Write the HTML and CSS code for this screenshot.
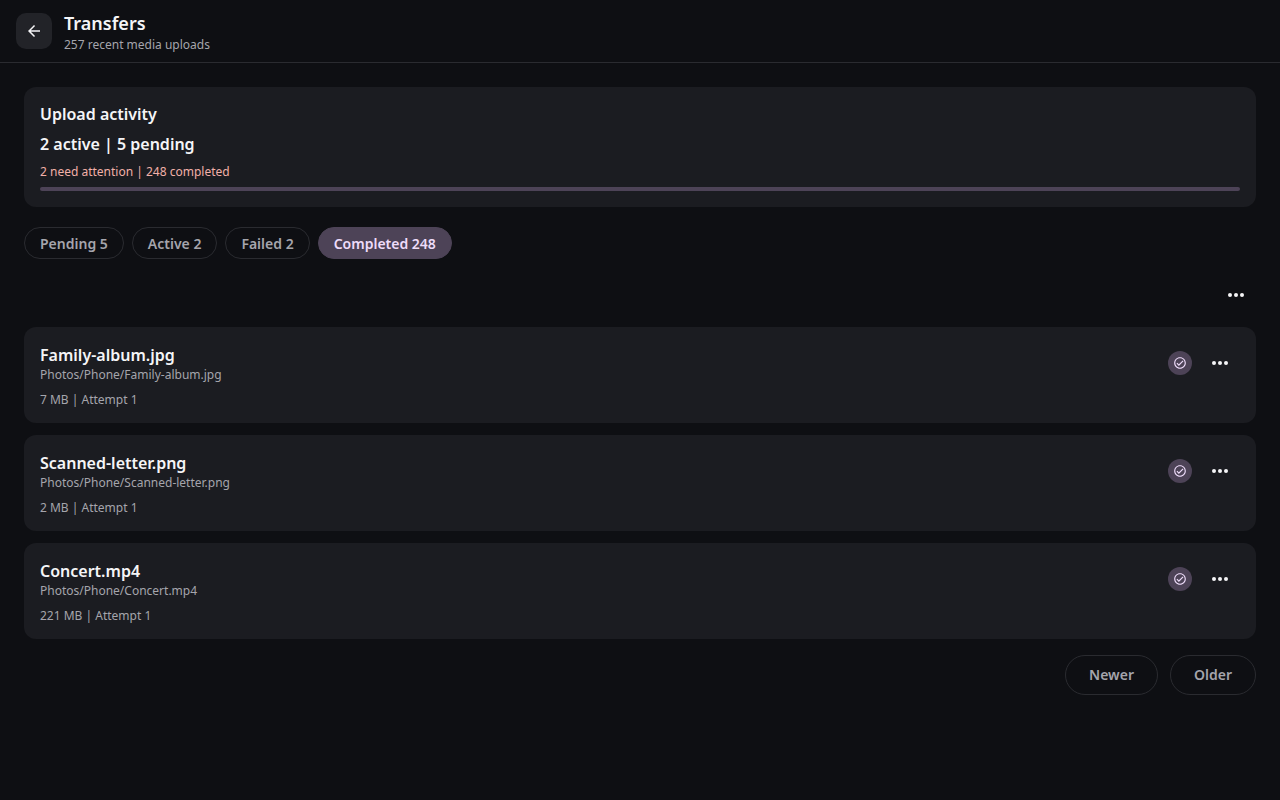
FILE: index.html
```html
<!DOCTYPE html>
<html lang="en">
<head>
    <meta charset="UTF-8">
    <meta name="viewport" content="width=device-width, initial-scale=1.0">
    <title>Transfers</title>
    <link rel="stylesheet" href="styles.css">
</head>
<body>
    <!-- Shared icons -->
    <svg class="sprite" aria-hidden="true">
        <symbol id="icon-more" viewBox="0 0 24 24">
            <circle cx="6" cy="12" r="2"/>
            <circle cx="12" cy="12" r="2"/>
            <circle cx="18" cy="12" r="2"/>
        </symbol>
        <symbol id="icon-done" viewBox="0 0 24 24">
            <path d="M12 2C6.48 2 2 6.48 2 12s4.48 10 10 10 10-4.48 10-10S17.52 2 12 2zm0 18c-4.41 0-8-3.59-8-8s3.59-8 8-8 8 3.59 8 8-3.59 8-8 8zm4.59-12.42L10 14.17l-2.59-2.58L6 13l4 4 8-8z"/>
        </symbol>
    </svg>

    <header class="topbar">
        <button class="back" type="button" aria-label="Back">
            <svg viewBox="0 0 24 24"><path d="M20 11H7.83l5.59-5.59L12 4l-8 8 8 8 1.41-1.41L7.83 13H20v-2z"/></svg>
        </button>
        <div>
            <h1>Transfers</h1>
            <p>257 recent media uploads</p>
        </div>
    </header>

    <main>
        <section class="card summary">
            <h2>Upload activity</h2>
            <p class="counts">2 active | 5 pending</p>
            <p class="attention">2 need attention | 248 completed</p>
            <div class="progress" role="progressbar" aria-label="Upload progress"></div>
        </section>

        <div class="filters">
            <button class="chip" type="button">Pending 5</button>
            <button class="chip" type="button">Active 2</button>
            <button class="chip" type="button">Failed 2</button>
            <button class="chip selected" type="button" aria-pressed="true">Completed 248</button>
        </div>

        <div class="toolbar">
            <button class="more" type="button" aria-label="More actions"><svg><use href="#icon-more"/></svg></button>
        </div>

        <ul class="transfers">
            <li class="card transfer">
                <div class="transfer-head">
                    <div class="file">
                        <h3>Family-album.jpg</h3>
                        <p>Photos/Phone/Family-album.jpg</p>
                    </div>
                    <span class="badge"><svg><use href="#icon-done"/></svg></span>
                    <button class="more" type="button" aria-label="Actions for Family-album.jpg"><svg><use href="#icon-more"/></svg></button>
                </div>
                <p class="meta">7 MB | Attempt 1</p>
            </li>
            <li class="card transfer">
                <div class="transfer-head">
                    <div class="file">
                        <h3>Scanned-letter.png</h3>
                        <p>Photos/Phone/Scanned-letter.png</p>
                    </div>
                    <span class="badge"><svg><use href="#icon-done"/></svg></span>
                    <button class="more" type="button" aria-label="Actions for Scanned-letter.png"><svg><use href="#icon-more"/></svg></button>
                </div>
                <p class="meta">2 MB | Attempt 1</p>
            </li>
            <li class="card transfer">
                <div class="transfer-head">
                    <div class="file">
                        <h3>Concert.mp4</h3>
                        <p>Photos/Phone/Concert.mp4</p>
                    </div>
                    <span class="badge"><svg><use href="#icon-done"/></svg></span>
                    <button class="more" type="button" aria-label="Actions for Concert.mp4"><svg><use href="#icon-more"/></svg></button>
                </div>
                <p class="meta">221 MB | Attempt 1</p>
            </li>
        </ul>

        <nav class="pager" aria-label="Pages">
            <button type="button">Newer</button>
            <button type="button">Older</button>
        </nav>
    </main>
</body>
</html>
```
FILE: styles.css
```css
* {
    box-sizing: border-box;
}
body {
    margin: 0;
    font-family: "Noto Sans", sans-serif;
    font-size: 12px;
    line-height: 16px;
    color: #a5a5ac;
    background-color: #0e0f13;
}
h1, h2, h3, p, ul {
    margin: 0;
    padding: 0;
}
h1, h2, h3, .counts {
    font-size: 16px;
    line-height: 22px;
    font-weight: 600;
    color: #f5f5f7;
}
button {
    padding: 0;
    border: none;
    background: none;
    font-family: inherit;
    font-size: 14px;
    line-height: 20px;
    font-weight: 600;
    color: #a5a5ac;
    cursor: pointer;
}
svg {
    display: block;
    fill: currentColor;
}
.sprite {
    display: none;
}

/* Header */
.topbar {
    display: flex;
    align-items: center;
    gap: 12px;
    padding: 9px 16px;
    border-bottom: 1px solid #2a2b30;
}
.topbar h1 {
    font-size: 18px;
    line-height: 28px;
}
.back {
    display: flex;
    align-items: center;
    justify-content: center;
    width: 36px;
    height: 36px;
    border-radius: 10px;
    background-color: #222328;
    color: #f5f5f7;
}
.back svg {
    width: 18px;
    height: 18px;
}

main {
    padding: 24px;
}
.card {
    padding: 16px;
    border-radius: 12px;
    background-color: #1b1c21;
}

/* Upload summary */
.summary h2, .counts {
    margin-bottom: 8px;
}
.attention {
    margin-bottom: 7px;
    line-height: 17px;
    color: #f2b0a8;
}
.progress {
    height: 4px;
    border-radius: 2px;
    background-color: #4d4357;
}

/* Filter chips */
.filters {
    display: flex;
    flex-wrap: wrap;
    gap: 8px;
    margin: 20px 0 16px;
}
.chip {
    height: 32px;
    padding: 2px 15px 0;
    border: 1px solid #2a2b30;
    border-radius: 16px;
}
.chip.selected {
    border-color: #4d4357;
    background-color: #4d4357;
    color: #eedcfa;
}

.toolbar {
    display: flex;
    justify-content: flex-end;
    margin-bottom: 12px;
}
.more {
    display: flex;
    align-items: center;
    justify-content: center;
    width: 40px;
    height: 40px;
    color: #f5f5f7;
}
.more svg {
    width: 24px;
    height: 24px;
}

/* Transfer list */
.transfers {
    display: flex;
    flex-direction: column;
    gap: 12px;
    list-style: none;
}
.transfer {
    display: flex;
    flex-direction: column;
    gap: 8px;
    padding-bottom: 15px;
}
.transfer-head {
    display: flex;
    align-items: center;
    gap: 8px;
}
.file {
    flex: 1;
}
.file h3 {
    line-height: 24px;
}
.meta {
    line-height: 17px;
}
.badge {
    display: flex;
    align-items: center;
    justify-content: center;
    width: 24px;
    height: 24px;
    border-radius: 50%;
    background-color: #4d4357;
    color: #eedcfa;
}
.badge svg {
    width: 14px;
    height: 14px;
}

.pager {
    display: flex;
    justify-content: flex-end;
    gap: 12px;
    margin-top: 16px;
}
.pager button {
    height: 40px;
    padding: 0 23px;
    border: 1px solid #2a2b30;
    border-radius: 20px;
}
```
